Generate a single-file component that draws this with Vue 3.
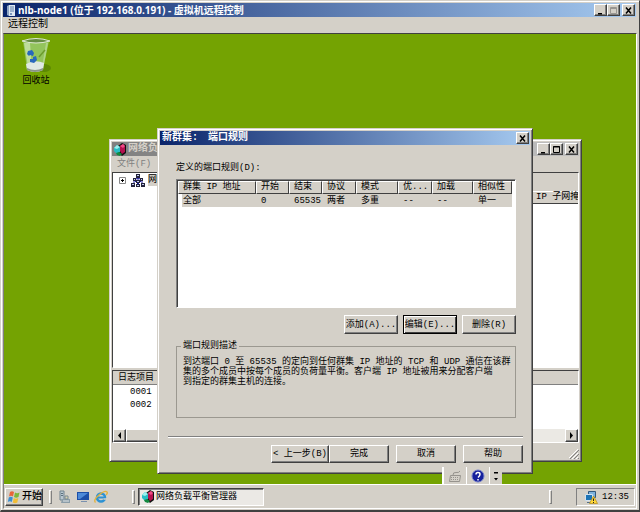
<script setup>
const columns = [
  { name: '群集 IP 地址', width: 78, value: '全部' },
  { name: '开始', width: 33, value: '0' },
  { name: '结束', width: 33, value: '65535' },
  { name: '协议', width: 34, value: '两者' },
  { name: '模式', width: 42, value: '多重' },
  { name: '优...', width: 34, value: '--' },
  { name: '加载', width: 41, value: '--' },
  { name: '相似性', width: 39, value: '单一' },
]
const description = [
  '到达端口 0 至 65535 的定向到任何群集 IP 地址的 TCP 和 UDP 通信在该群',
  '集的多个成员中按每个成员的负荷量平衡。客户端 IP 地址被用来分配客户端',
  '到指定的群集主机的连接。',
]
const logEntries = ['0001', '0002']
</script>

<template>
  <div class="viewer">
    <header class="titlebar main-title">
      <svg class="server-icon" viewBox="0 0 12 13" aria-hidden="true">
        <path d="M4 1h6v11H4z" fill="#dfe8f2" />
        <path d="M2 2l2-1v11l-2-1z" fill="#8fa6c4" />
        <path d="M5 3h4M5 5h4M5 7h4" stroke="#5d7da8" />
        <path d="M5 9h2v2H5z" fill="#7c98bd" />
      </svg>
      <h1>nlb-node1 (位于 192.168.0.191) - 虚拟机远程控制</h1>
      <span class="caption">
        <button class="cap" aria-label="最小化"><svg viewBox="0 0 9 9"><path d="M2 7h4v1.500H2z" /></svg></button>
        <button class="cap" aria-label="最大化"><svg viewBox="0 0 9 9"><path d="M1.500 1.500h6v6h-6zM1 2.500h7" fill="none" stroke="#999691" /></svg></button>
        <button class="cap close" aria-label="关闭"><svg viewBox="0 0 9 9"><path d="M2 1.500l5 6M7 1.500l-5 6" fill="none" stroke="#000" stroke-width="1.500" /></svg></button>
      </span>
    </header>
    <nav class="menubar"><a href="#">远程控制</a></nav>

    <main class="screen">
      <div class="desktop">
        <a class="shortcut" href="#">
          <svg class="bin" viewBox="0 0 30 37" aria-hidden="true">
            <ellipse cx="23" cy="31" rx="7" ry="4" fill="#4e7803" opacity=".6" />
            <path d="M2 4l4 28q8 5 16 0l6-28z" fill="#93c45c" />
            <path d="M3 6l4 24q2 2 4 2L9 6z" fill="#c9e2ab" opacity=".8" />
            <path d="M25 6l-4 24q2-1 2-3l4-21z" fill="#b9d994" opacity=".8" />
            <path d="M5 27q9-5 18-1l-1 7q-8 4-16 0z" fill="#dfe8e4" />
            <path d="M6 31q8 4 16 0v2q-8 4-16 0z" fill="#8b9589" />
            <path d="M7 14l4-1 2 3-1 3-3-1-1 1-2-2zM12 20l3-1 1 4-3 3-4-1 0-3 3 0z" fill="#2868bd" />
            <path d="M18 20l6-7" stroke="#6c9b2e" stroke-width="1.500" />
            <path d="M1 4q14-5 28 0-14 4-28 0z" fill="#668d42" stroke="#dfe9d6" stroke-width="1" />
          </svg>
          <span>回收站</span>
        </a>

        <section class="window manager">
          <header class="titlebar inactive">
            <svg class="cubes" viewBox="0 0 14 13" aria-hidden="true">
              <path d="M5 3l4-3 4 2v8l-4 3-4-4z" fill="#111" />
              <path d="M1 5l3-3 3 2v5l-3 2-3-3z" fill="#27bcc4" /><path d="M1 5l3-3 3 2-3 2z" fill="#9af0ee" />
              <path d="M7 3l3-2 2 2v6l-3 2-2-3z" fill="#b3124f" /><path d="M7 3l3-2 2 2-2 2z" fill="#ef4c87" />
              <path d="M3 10l3-1 3 2-2 2-3-1z" fill="#13893f" />
            </svg>
            <h2>网络负载平衡管理器</h2>
            <span class="caption">
              <button class="cap" aria-label="最小化"><svg viewBox="0 0 9 9"><path d="M2 7h4v1.500H2z" /></svg></button>
              <button class="cap" aria-label="最大化"><svg viewBox="0 0 9 9"><path d="M1.500 1.500h6v6h-6zM1 2h7" fill="none" stroke="#000" /></svg></button>
              <button class="cap close" aria-label="关闭"><svg viewBox="0 0 9 9"><path d="M2 1.500l5 6M7 1.500l-5 6" fill="none" stroke="#000" stroke-width="1.500" /></svg></button>
            </span>
          </header>
          <nav class="manager-menu"><a href="#">文件(F)</a></nav>
          <div class="panes">
            <div class="tree">
              <svg class="plus" viewBox="0 0 7 7" aria-hidden="true"><path d="M.5.5h6v6h-6z" fill="#fff" stroke="#888" /><path d="M2 3.500h3M3.500 2v3" stroke="#000" /></svg>
              <svg class="network" viewBox="0 0 14 13" aria-hidden="true">
                <path d="M7 3v7M7 4l-4 2v4M7 4l4 2v4M3 6l4 4 4-4" fill="none" stroke="#1c1c9c" />
                <path d="M5 0h4v4H5zM2 4h3v3H2zM9 4h3v3H9zM5 6h4v3H5zM0 9h4v4H0zM5 10h4v3H5zM10 9h4v4h-4z" fill="#23233a" />
                <path d="M6 1h2v1H6zM3 5h1v1H3zM10 5h1v1h-1zM6 7h2v1H6zM1 10h2v1H1zM6 11h2v1H6zM11 10h2v1h-2z" fill="#c3cdf4" />
              </svg>
              <span class="tree-label">网络</span>
            </div>
            <div class="details">
              <div class="details-caption"></div>
              <table class="details-table"><thead><tr><th>IP 子网掩</th></tr></thead></table>
            </div>
          </div>
          <div class="log">
            <table class="log-table">
              <thead><tr><th>日志项目</th></tr></thead>
              <tbody><tr v-for="entry in logEntries" :key="entry"><td>{{ entry }}</td></tr></tbody>
            </table>
            <div class="scrollbar">
              <button aria-label="向左滚动"><svg viewBox="0 0 9 9"><path d="M6 1v7L3 4.500z" /></svg></button>
              <span class="thumb"></span>
              <button aria-label="向右滚动"><svg viewBox="0 0 9 9"><path d="M3 1v7l3-3.500z" /></svg></button>
            </div>
          </div>
          <footer class="status">
            <svg viewBox="0 0 10 10" aria-hidden="true"><path d="M0 10L10 0M4 10l6-6M8 10l2-2" stroke="#fff" transform="translate(-1 0)" /><path d="M1 10l9-9M5 10l5-5M9 10l1-1" stroke="#808080" /></svg>
          </footer>
        </section>

        <section class="window dialog" role="dialog" aria-labelledby="dialog-title">
          <header class="titlebar active">
            <h2 id="dialog-title">新群集:<span>端口规则</span></h2>
            <span class="caption">
              <button class="cap" aria-label="关闭"><svg viewBox="0 0 9 9"><path d="M2 1.500l5 6M7 1.500l-5 6" fill="none" stroke="#000" stroke-width="1.500" /></svg></button>
            </span>
          </header>
          <div class="dialog-body">
            <p id="rules-label" class="rules-label">定义的端口规则(D):</p>
            <div class="list">
              <table class="rules" aria-labelledby="rules-label">
                <colgroup><col v-for="c in columns" :key="c.name" :style="{ width: c.width + 'px' }" /></colgroup>
                <thead><tr><th v-for="c in columns" :key="c.name">{{ c.name }}</th></tr></thead>
                <tbody><tr><td v-for="c in columns" :key="c.name">{{ c.value }}</td></tr></tbody>
              </table>
            </div>
            <div class="rule-actions">
              <button class="btn">添加(A)...</button>
              <button class="btn default">编辑(E)...</button>
              <button class="btn">删除(R)</button>
            </div>
            <fieldset class="group">
              <legend>端口规则描述</legend>
              <p><span v-for="line in description" :key="line">{{ line }}</span></p>
            </fieldset>
          </div>
          <footer class="wizard">
            <span class="pair">
              <button class="btn back">&lt; 上一步(B)</button>
              <button class="btn">完成</button>
            </span>
            <button class="btn">取消</button>
            <button class="btn">帮助</button>
          </footer>
        </section>

        <div class="langbar">
          <button aria-label="键盘">
            <svg viewBox="0 0 14 14"><path d="M2.500 6.500h10l-1 6H1.500zM5 6q0-3 3-2.500T12 2" fill="none" stroke="#96938d" /><path d="M3 8.500h8M3 10.500h8" stroke="#96938d" stroke-dasharray="1 1" /></svg>
          </button>
          <button aria-label="帮助">
            <svg viewBox="0 0 14 14"><circle cx="7" cy="7" r="6" fill="#15209c" stroke="#7480c9" /><path d="M5 5.500q0-2 2-2t2 1.700T7 8.500M7 10v1.500" fill="none" stroke="#fff" stroke-width="1.500" /></svg>
          </button>
          <button class="more" aria-label="选项">
            <svg viewBox="0 0 8 14"><path d="M2 3h4v1.500H2zM2 9h4l-2 2.500z" /></svg>
          </button>
        </div>
      </div>

      <footer class="taskbar">
        <button class="start">
          <svg viewBox="0 0 14 14" aria-hidden="true">
            <path d="M3 2q2-1.500 4 0L6 6.500q-2-1.500-4 0z" fill="#e8653a" /><path d="M8 2.500q2 1.300 4.500 0l-1 4.500q-2.500 1.300-4.500 0z" fill="#7db73b" />
            <path d="M1.800 7.500q2-1.500 4 0l-1 4.500q-2-1.500-4 0z" fill="#3b8fd0" /><path d="M6.800 8q2 1.300 4.500 0l-1 4.500q-2.500 1.300-4.500 0z" fill="#f1bd36" />
          </svg>
          <span>开始</span>
        </button>
        <span class="divider"></span>
        <div class="quick">
          <a href="#" aria-label="服务器管理器">
            <svg viewBox="0 0 14 14"><path d="M2 1h4v9H2z" fill="#b9c6cf" stroke="#71838f" /><path d="M3 3.500h2M3 5.500h2" stroke="#5c717f" /><path d="M4 9h8v4H3z" fill="#8b9da8" /><path d="M7 6h3v3H7z" fill="#d8d2ac" stroke="#788995" /><path d="M5 11h6" stroke="#dfe5e8" /></svg>
          </a>
          <a href="#" aria-label="显示桌面">
            <svg viewBox="0 0 14 14"><path d="M1 2h12v8H1z" fill="#1c4fa8" /><path d="M2 3h10L4 9H2z" fill="#4d8ad8" /><path d="M5 11h6v1H5z" fill="#7990ae" /></svg>
          </a>
          <a href="#" aria-label="Internet Explorer">
            <svg viewBox="0 0 14 14"><circle cx="7" cy="7.500" r="4" fill="none" stroke="#2e92d3" stroke-width="2.500" /><path d="M3 7.500h8" stroke="#2e92d3" stroke-width="2" /><path d="M9.500 9h4" stroke="#d4d0c8" stroke-width="1.500" /><path d="M1.500 12.500Q-1 10 5 5T13 2q1 1-1 3" fill="none" stroke="#e3b23c" stroke-width="1.300" /></svg>
          </a>
        </div>
        <span class="divider"></span>
        <button class="task">
          <svg class="cubes" viewBox="0 0 14 13" aria-hidden="true">
            <path d="M5 3l4-3 4 2v8l-4 3-4-4z" fill="#111" />
            <path d="M1 5l3-3 3 2v5l-3 2-3-3z" fill="#27bcc4" /><path d="M1 5l3-3 3 2-3 2z" fill="#9af0ee" />
            <path d="M7 3l3-2 2 2v6l-3 2-2-3z" fill="#b3124f" /><path d="M7 3l3-2 2 2-2 2z" fill="#ef4c87" />
            <path d="M3 10l3-1 3 2-2 2-3-1z" fill="#13893f" />
          </svg>
          <span>网络负载平衡管理器</span>
        </button>
        <span class="divider right"></span>
        <div class="tray">
          <svg viewBox="0 0 14 14" role="img" aria-label="网络">
            <path d="M4.500 1.500h7v6h-7z" fill="#7fb3dd" stroke="#31597f" /><path d="M1.500 4.500h7v6h-7z" fill="#1d74b5" stroke="#d3e2ee" /><path d="M3 12h4v1H3z" fill="#54708a" />
            <path d="M9.500 6l4 7.500h-8z" fill="#ffd83a" stroke="#b58a12" stroke-width=".7" /><path d="M9.500 8.500v2.500M9.500 12v1" stroke="#222" />
          </svg>
          <time>12:35</time>
        </div>
      </footer>
    </main>
  </div>
</template>

<style>
body { margin: 0; overflow: hidden; }
</style>

<style scoped>
* { box-sizing: border-box; }
h1, h2, p { margin: 0; font: inherit; }
a { color: inherit; text-decoration: none; }
svg { display: block; flex: none; }
button { font: inherit; color: inherit; margin: 0; padding: 0; border: 0; background: #d4d0c8; white-space: nowrap; }
table { border-collapse: separate; border-spacing: 0; }
th, td { padding: 0; font-weight: 400; text-align: left; white-space: nowrap; }

.viewer {
  display: flex; flex-direction: column; height: 100vh; padding: 2px 2px 1px 1px;
  border: solid; border-width: 1px 1px 2px 1px; border-color: #d4d0c8 #404040 #404040 #d4d0c8;
  background: #d4d0c8; color: #000; overflow: hidden;
  font: 9px/12px "Liberation Mono", "Noto Sans CJK SC", monospace;
  box-shadow: inset 1px 1px #fff;
}
.titlebar { display: flex; align-items: center; height: 14px; color: #fff; font-size: 10px; font-weight: 700; white-space: nowrap; flex: none; overflow: hidden; }
.main-title { margin: 0 1px; padding: 0 1px 0 2px; gap: 1px; background: linear-gradient(90deg, #0a246a, #a6caf0); font-family: "Noto Sans", "Noto Sans CJK SC", sans-serif; }
.active { padding: 0 1px 0 2px; background: linear-gradient(90deg, #0a246a, #a6caf0); }
.active h2 { display: flex; gap: 10px; }
.inactive { padding: 0 1px; gap: 1px; background: linear-gradient(90deg, #808080, #c0c0c0); color: #d4d0c8; }
.server-icon { width: 12px; height: 13px; }
.cubes { width: 14px; height: 13px; }
.caption { display: flex; margin-left: auto; }
.cap { display: grid; place-items: center; width: 13px; height: 12px; border: 1px solid; border-color: #fff #404040 #404040 #fff; box-shadow: inset -1px -1px #808080; }
.cap svg { width: 9px; height: 9px; }
.close { margin-left: 2px; }
.menubar { height: 16px; padding: 2px 6px; font-size: 10px; flex: none; }

.screen { display: flex; flex-direction: column; flex: 1; min-height: 0; margin: 0 0 0 1px; border: 1px solid; border-color: #404040 #fff #fff #808080; }
.desktop { position: relative; flex: 1; min-height: 0; background: #74a302; overflow: hidden; }
.shortcut { position: absolute; left: 14px; top: 3px; display: flex; flex-direction: column; align-items: center; gap: 1px; width: 36px; }
.bin { width: 30px; height: 37px; }

.window { position: absolute; display: flex; flex-direction: column; padding: 2px; background: #d4d0c8; border: 1px solid; border-color: #d4d0c8 #404040 #404040 #d4d0c8; box-shadow: inset 1px 1px #fff, inset -1px -1px #808080; }
.manager { left: 105px; top: 105px; width: 473px; height: 323px; }
.manager-menu { height: 16px; padding: 2px 5px; color: #808080; flex: none; }
.panes { display: flex; flex: 1; min-height: 0; border: 1px solid; border-color: #404040 #fff #fff #404040; }
.tree { display: flex; align-items: flex-start; gap: 5px; width: 260px; padding: 1px 6px; background: #fff; overflow: hidden; white-space: nowrap; }
.plus { width: 7px; height: 7px; margin-top: 3px; }
.network { width: 14px; height: 13px; }
.tree-label { margin-left: -2px; background: #d4d0c8; }
.details { flex: 1; min-width: 0; border-left: 4px solid #d4d0c8; background: #fff; overflow: hidden; }
.details-caption { height: 18px; background: #d4d0c8; }
.details-table { width: 100%; table-layout: fixed; }
.details-table th { height: 13px; padding-left: 159px; background: #d4d0c8; border-bottom: 1px solid #404040; border-top: 1px solid #fff; line-height: 11px; }
.log { display: flex; flex-direction: column; height: 73px; margin-top: 2px; background: #fff; border: 1px solid; border-color: #404040 #fff #fff #404040; flex: none; }
.log-table { width: 100%; }
.log-table th { height: 14px; padding-left: 5px; background: #d4d0c8; border-bottom: 1px solid #808080; }
.log-table td { height: 13px; padding-left: 17px; }
.scrollbar { display: flex; height: 13px; margin-top: auto; background: #ebe9e4; }
.scrollbar button, .thumb { border: 1px solid; border-color: #fff #404040 #404040 #fff; background: #d4d0c8; box-shadow: inset -1px -1px #808080; }
.scrollbar button { display: grid; place-items: center; width: 13px; }
.scrollbar button:last-child { margin-left: auto; }
.scrollbar svg { width: 9px; height: 9px; }
.thumb { width: 260px; }
.status { display: flex; justify-content: flex-end; align-items: flex-end; height: 16px; flex: none; }
.status svg { width: 10px; height: 10px; }

.dialog { left: 153px; top: 94px; width: 376px; height: 346px; }
.dialog-body { padding: 16px 14px 18px 16px; }
.rules-label { line-height: 14px; margin-bottom: 4px; }
.list { height: 129px; background: #fff; border: 1px solid; border-color: #808080 #fff #fff #808080; box-shadow: inset 1px 1px #404040; padding: 1px 0 0 1px; }
.rules { table-layout: fixed; width: 334px; }
.rules th { height: 13px; padding-left: 4px; line-height: 11px; background: #d4d0c8; border: 1px solid; border-color: #fff #404040 #404040 #fff; }
.rules td { height: 13px; padding-left: 5px; line-height: 12px; background: #d4d0c8; }
.rules td:first-child { border-left: 4px solid #fff; padding-left: 1px; }
.rule-actions { display: flex; justify-content: flex-end; gap: 5px; margin-top: 7px; }
.btn { height: 18px; border: 1px solid; border-color: #fff #404040 #404040 #fff; box-shadow: inset -1px -1px #808080; line-height: 14px; }
.rule-actions .btn { width: 54px; height: 19px; }
.rule-actions .default { border-color: #000; box-shadow: inset 1px 1px #fff, inset -1px -1px #404040; }
.group { min-width: 0; margin: 6px 0 0; padding: 5px 0 0 6px; height: 78px; border: 1px solid #9b9890; }
.group legend { padding: 0 2px; margin-left: -2px; line-height: 12px; }
.group p { display: flex; flex-direction: column; line-height: 10px; white-space: nowrap; }
.wizard { display: flex; justify-content: flex-end; gap: 7px; margin: 0 7px 0 8px; padding-top: 8px; border-top: 1px solid #808080; box-shadow: inset 0 1px #fff; }
.wizard .btn { width: 60px; height: 18px; }
.wizard .back { width: 58px; }
.pair { display: flex; }

.langbar { position: absolute; left: 438px; top: 433px; display: flex; height: 18px; background: #d4d0c8; border-left: 1px solid #fff; }
.langbar button { display: grid; place-items: center; width: 23px; border-left: 1px solid #fff; }
.langbar svg { height: 14px; width: 14px; }
.langbar .more { width: 13px; }
.langbar .more svg { width: 8px; }

.taskbar { display: flex; align-items: center; height: 24px; padding: 0 1px; background: #d4d0c8; border-top: 1px solid #fff; flex: none; }
.start { display: flex; align-items: center; gap: 1px; width: 38px; height: 18px; padding: 0 1px; border: 1px solid; border-color: #fff #404040 #404040 #fff; box-shadow: inset -1px -1px #808080; font-size: 10px; font-weight: 500; }
.start svg, .quick svg, .tray svg { width: 14px; height: 14px; }
.divider { width: 3px; height: 14px; margin-left: 6px; border: 1px solid; border-color: #fff #808080 #808080 #fff; }
.quick { display: flex; gap: 4px; width: 74px; padding-left: 6px; }
.task { display: flex; align-items: center; gap: 1px; width: 126px; height: 18px; margin-left: 3px; padding: 0 2px; background: #ebe9e5; border: 1px solid; border-color: #404040 #fff #fff #404040; box-shadow: inset 1px 1px #808080; }
.right { margin-left: auto; }
.tray { display: flex; align-items: center; justify-content: flex-end; gap: 4px; width: 59px; height: 18px; margin-left: 24px; padding-right: 5px; border: 1px solid; border-color: #808080 #fff #fff #808080; }
</style>
